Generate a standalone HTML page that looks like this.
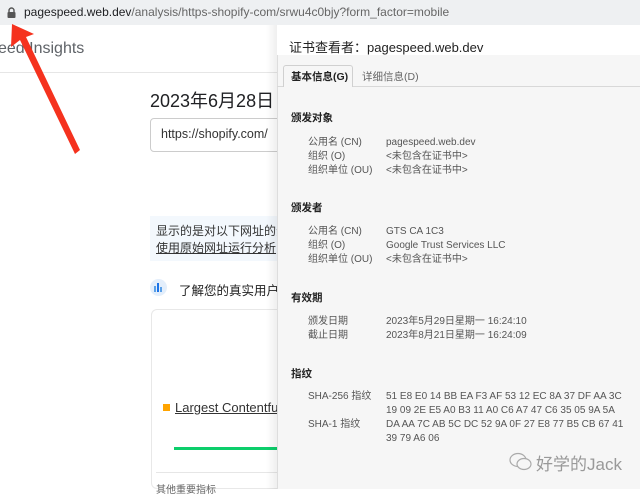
<!DOCTYPE html>
<html><head><meta charset="utf-8"><style>
*{margin:0;padding:0;box-sizing:border-box}
body{width:640px;height:489px;overflow:hidden;background:#fff;position:relative;font-family:"Liberation Sans","Noto Sans CJK SC",sans-serif;color:#222}
.a{position:absolute;white-space:nowrap}
</style></head><body>
<div class="a" style="left:0;top:0;width:640px;height:25px;background:#eef0f2"></div>
<svg class="a" style="left:7px;top:7px" width="9" height="11" viewBox="0 0 9 11"><path d="M2 5V3.5a2.5 2.5 0 0 1 5 0V5" fill="none" stroke="#555" stroke-width="1.4"/><rect x="0.5" y="5" width="8" height="6" rx="1" fill="#555"/></svg>
<div class="a" style="left:24px;top:5px;font-size:12px;color:#202124">pagespeed.web.dev<span style="color:#666">/analysis/https-shopify-com/srwu4c0bjy?form_factor=mobile</span></div>
<div class="a" style="left:-2px;top:40px;font-size:16px;color:#5f6368">eed Insights</div>
<div class="a" style="left:0;top:72px;width:280px;height:1px;background:#e6e6e6"></div>
<div class="a" style="left:150px;top:87px;font-size:18px;color:#202124">2023年6月28日 1</div>
<div class="a" style="left:150px;top:118px;width:140px;height:34px;border:1px solid #ccc;border-radius:4px"></div>
<div class="a" style="left:161px;top:127px;font-size:12.5px;color:#333">https://shopify.com/</div>
<div class="a" style="left:150px;top:216px;width:140px;height:45px;background:#f3f8fd"></div>
<div class="a" style="left:156px;top:222px;font-size:12px;color:#333">显示的是对以下网址的分</div>
<div class="a" style="left:156px;top:239px;font-size:12px;color:#333;text-decoration:underline">使用原始网址运行分析</div>
<div class="a" style="left:150px;top:279px;width:17px;height:17px;border-radius:50%;background:#e3eefb"></div>
<div class="a" style="left:154px;top:286px;width:2px;height:6px;background:#5aa0e8"></div>
<div class="a" style="left:157px;top:283px;width:2px;height:9px;background:#1a73e8"></div>
<div class="a" style="left:160px;top:287px;width:2px;height:5px;background:#5aa0e8"></div>
<div class="a" style="left:179px;top:280px;font-size:12.5px;color:#222">了解您的真实用户的</div>
<div class="a" style="left:151px;top:309px;width:140px;height:180px;border:1px solid #e8e8e8;border-radius:6px"></div>
<div class="a" style="left:163px;top:404px;width:7px;height:7px;background:#ffa400"></div>
<div class="a" style="left:175px;top:400px;font-size:13px;color:#333;text-decoration:underline">Largest Contentful P</div>
<div class="a" style="left:174px;top:447px;width:110px;height:3px;background:#0cce6b"></div>
<div class="a" style="left:156px;top:472px;width:130px;height:1px;background:#e6e6e6"></div>
<div class="a" style="left:156px;top:481px;font-size:10px;color:#666">其他重要指标</div>
<svg class="a" style="left:0;top:0" width="100" height="160"><path d="M12 24 L34 34 L26 37 L80 150 L75 154 L20 40 L11 47 Z" fill="#f5321e"/></svg>
<div class="a" style="left:266px;top:25px;width:12px;height:464px;background:linear-gradient(to right,rgba(0,0,0,0),rgba(0,0,0,0.07))"></div>
<div class="a" style="left:277px;top:25px;width:363px;height:464px;background:#f6f6f6;border-left:1px solid #ddd"></div>
<div class="a" style="left:277px;top:25px;width:363px;height:30px;background:#fff"></div>
<div class="a" style="left:289px;top:37px;font-size:13px;color:#222">证书查看者：pagespeed.web.dev</div>
<div class="a" style="left:277px;top:86px;width:363px;height:1px;background:#d8d8d8"></div>
<div class="a" style="left:283px;top:65px;width:70px;height:22px;background:#f6f6f6;border:1px solid #d0d0d0;border-bottom:none;border-radius:3px 3px 0 0"></div>
<div class="a" style="left:291px;top:69px;font-size:10.5px;font-weight:bold;color:#222">基本信息(G)</div>
<div class="a" style="left:362px;top:69px;font-size:10.5px;color:#666">详细信息(D)</div>
<div style="font-size:10px;color:#222">
<div class="a" style="left:291px;top:110px;font-weight:bold;font-size:10.5px">颁发对象</div>
<div class="a" style="left:308px;top:136px;color:#555;line-height:14px">公用名 (CN)<br>组织 (O)<br>组织单位 (OU)</div>
<div class="a" style="left:386px;top:136px;color:#555;line-height:14px">pagespeed.web.dev<br>&lt;未包含在证书中&gt;<br>&lt;未包含在证书中&gt;</div>
<div class="a" style="left:291px;top:200px;font-weight:bold;font-size:10.5px">颁发者</div>
<div class="a" style="left:308px;top:225px;color:#555;line-height:14px">公用名 (CN)<br>组织 (O)<br>组织单位 (OU)</div>
<div class="a" style="left:386px;top:225px;color:#555;line-height:14px">GTS CA 1C3<br>Google Trust Services LLC<br>&lt;未包含在证书中&gt;</div>
<div class="a" style="left:291px;top:290px;font-weight:bold;font-size:10.5px">有效期</div>
<div class="a" style="left:308px;top:315px;color:#555;line-height:14px">颁发日期<br>截止日期</div>
<div class="a" style="left:386px;top:315px;color:#555;line-height:14px">2023年5月29日星期一 16:24:10<br>2023年8月21日星期一 16:24:09</div>
<div class="a" style="left:291px;top:366px;font-weight:bold;font-size:10.5px">指纹</div>
<div class="a" style="left:308px;top:390px;color:#555;line-height:14px">SHA-256 指纹<br><br>SHA-1 指纹</div>
<div class="a" style="left:386px;top:390px;color:#555;line-height:14px">51 E8 E0 14 BB EA F3 AF 53 12 EC 8A 37 DF AA 3C<br>19 09 2E E5 A0 B3 11 A0 C6 A7 47 C6 35 05 9A 5A<br>DA AA 7C AB 5C DC 52 9A 0F 27 E8 77 B5 CB 67 41<br>39 79 A6 06</div>
</div>
<svg class="a" style="left:509px;top:452px" width="24" height="20" viewBox="0 0 24 20"><ellipse cx="9" cy="8" rx="8" ry="6.5" fill="none" stroke="#aaa" stroke-width="1.2"/><ellipse cx="15" cy="12" rx="7" ry="5.5" fill="#f6f6f6" stroke="#aaa" stroke-width="1.2"/></svg>
<div class="a" style="left:536px;top:450px;font-size:17px;color:#999">好学的Jack</div>
</body></html>
